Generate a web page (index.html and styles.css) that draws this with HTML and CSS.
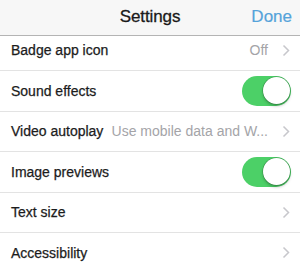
FILE: index.html
```html
<!DOCTYPE html>
<html>
<head>
<meta charset="utf-8">
<link rel="stylesheet" href="styles.css">
</head>
<body>
<div class="screen">
  <header class="navbar">
    <span class="nav-spacer"></span>
    <span class="nav-title">Settings</span>
    <span class="nav-done">Done</span>
  </header>
  <div class="list-viewport">
    <ul class="list">
      <li class="row">
        <span class="label">Badge app icon</span>
        <span class="value">Off</span>
        <svg class="chevron" width="8" height="13" viewBox="0 0 8 13"><polyline points="1.5,1.5 6.5,6.5 1.5,11.5" fill="none" stroke="#c7c7cc" stroke-width="1.5"/></svg>
      </li>
      <li class="row">
        <span class="label">Sound effects</span>
        <span class="toggle on"><span class="knob"></span></span>
      </li>
      <li class="row">
        <span class="label">Video autoplay</span>
        <span class="value value-wide">Use mobile data and W...</span>
        <svg class="chevron" width="8" height="13" viewBox="0 0 8 13"><polyline points="1.5,1.5 6.5,6.5 1.5,11.5" fill="none" stroke="#c7c7cc" stroke-width="1.5"/></svg>
      </li>
      <li class="row">
        <span class="label">Image previews</span>
        <span class="toggle on"><span class="knob"></span></span>
      </li>
      <li class="row">
        <span class="label">Text size</span>
        <svg class="chevron" width="8" height="13" viewBox="0 0 8 13"><polyline points="1.5,1.5 6.5,6.5 1.5,11.5" fill="none" stroke="#c7c7cc" stroke-width="1.5"/></svg>
      </li>
      <li class="row">
        <span class="label">Accessibility</span>
        <svg class="chevron" width="8" height="13" viewBox="0 0 8 13"><polyline points="1.5,1.5 6.5,6.5 1.5,11.5" fill="none" stroke="#c7c7cc" stroke-width="1.5"/></svg>
      </li>
    </ul>
  </div>
</div>
</body>
</html>
```

FILE: styles.css
```css
* { box-sizing: border-box; }
html, body {
  margin: 0;
  padding: 0;
  background: #ffffff;
  font-family: "Liberation Sans", Arial, sans-serif;
  overflow: hidden;
}
.screen {
  width: 300px;
  height: 273px;
  display: flex;
  flex-direction: column;
  overflow: hidden;
}
.navbar {
  position: relative;
  z-index: 1;
  flex: 0 0 36px;
  height: 36px;
  background: #f7f7f7;
  border-bottom: 1px solid #b4b4b4;
  display: grid;
  grid-template-columns: 1fr auto 1fr;
  align-items: center;
  padding: 0 8px 2px 8px;
}
.nav-title {
  font-size: 17px;
  color: #1a1a1a;
  letter-spacing: -0.1px;
  -webkit-text-stroke: 0.3px #1a1a1a;
}
.nav-done {
  justify-self: end;
  font-size: 17px;
  color: #55a3da;
  -webkit-text-stroke: 0.2px #55a3da;
}
.list-viewport {
  flex: 1;
  overflow: hidden;
}
.list {
  list-style: none;
  margin: -5.5px 0 0 0;
  padding: 0;
}
.row {
  height: 40.5px;
  border-bottom: 1px solid #e3e3e3;
  display: flex;
  align-items: center;
  padding: 0 10px 0 11px;
}
.label {
  font-size: 14px;
  color: #1c1c1c;
  flex: 1;
  white-space: nowrap;
  -webkit-text-stroke: 0.25px #1c1c1c;
}
.value {
  font-size: 14px;
  color: #a4a4a8;
  margin-right: 14px;
  white-space: nowrap;
}
.value-wide {
  flex: 0 0 auto;
}
.chevron {
  flex: 0 0 auto;
  display: block;
}
.toggle {
  position: relative;
  width: 49px;
  height: 30px;
  border-radius: 15px;
  background: #4cd067;
  flex: 0 0 auto;
  margin-right: -1px;
}
.knob {
  position: absolute;
  top: 1.5px;
  right: 1.5px;
  width: 27px;
  height: 27px;
  border-radius: 50%;
  background: #ffffff;
  box-shadow: 0 0 0 0.5px rgba(0,0,0,0.25), 0 2px 3px rgba(0,0,0,0.25);
}
```
